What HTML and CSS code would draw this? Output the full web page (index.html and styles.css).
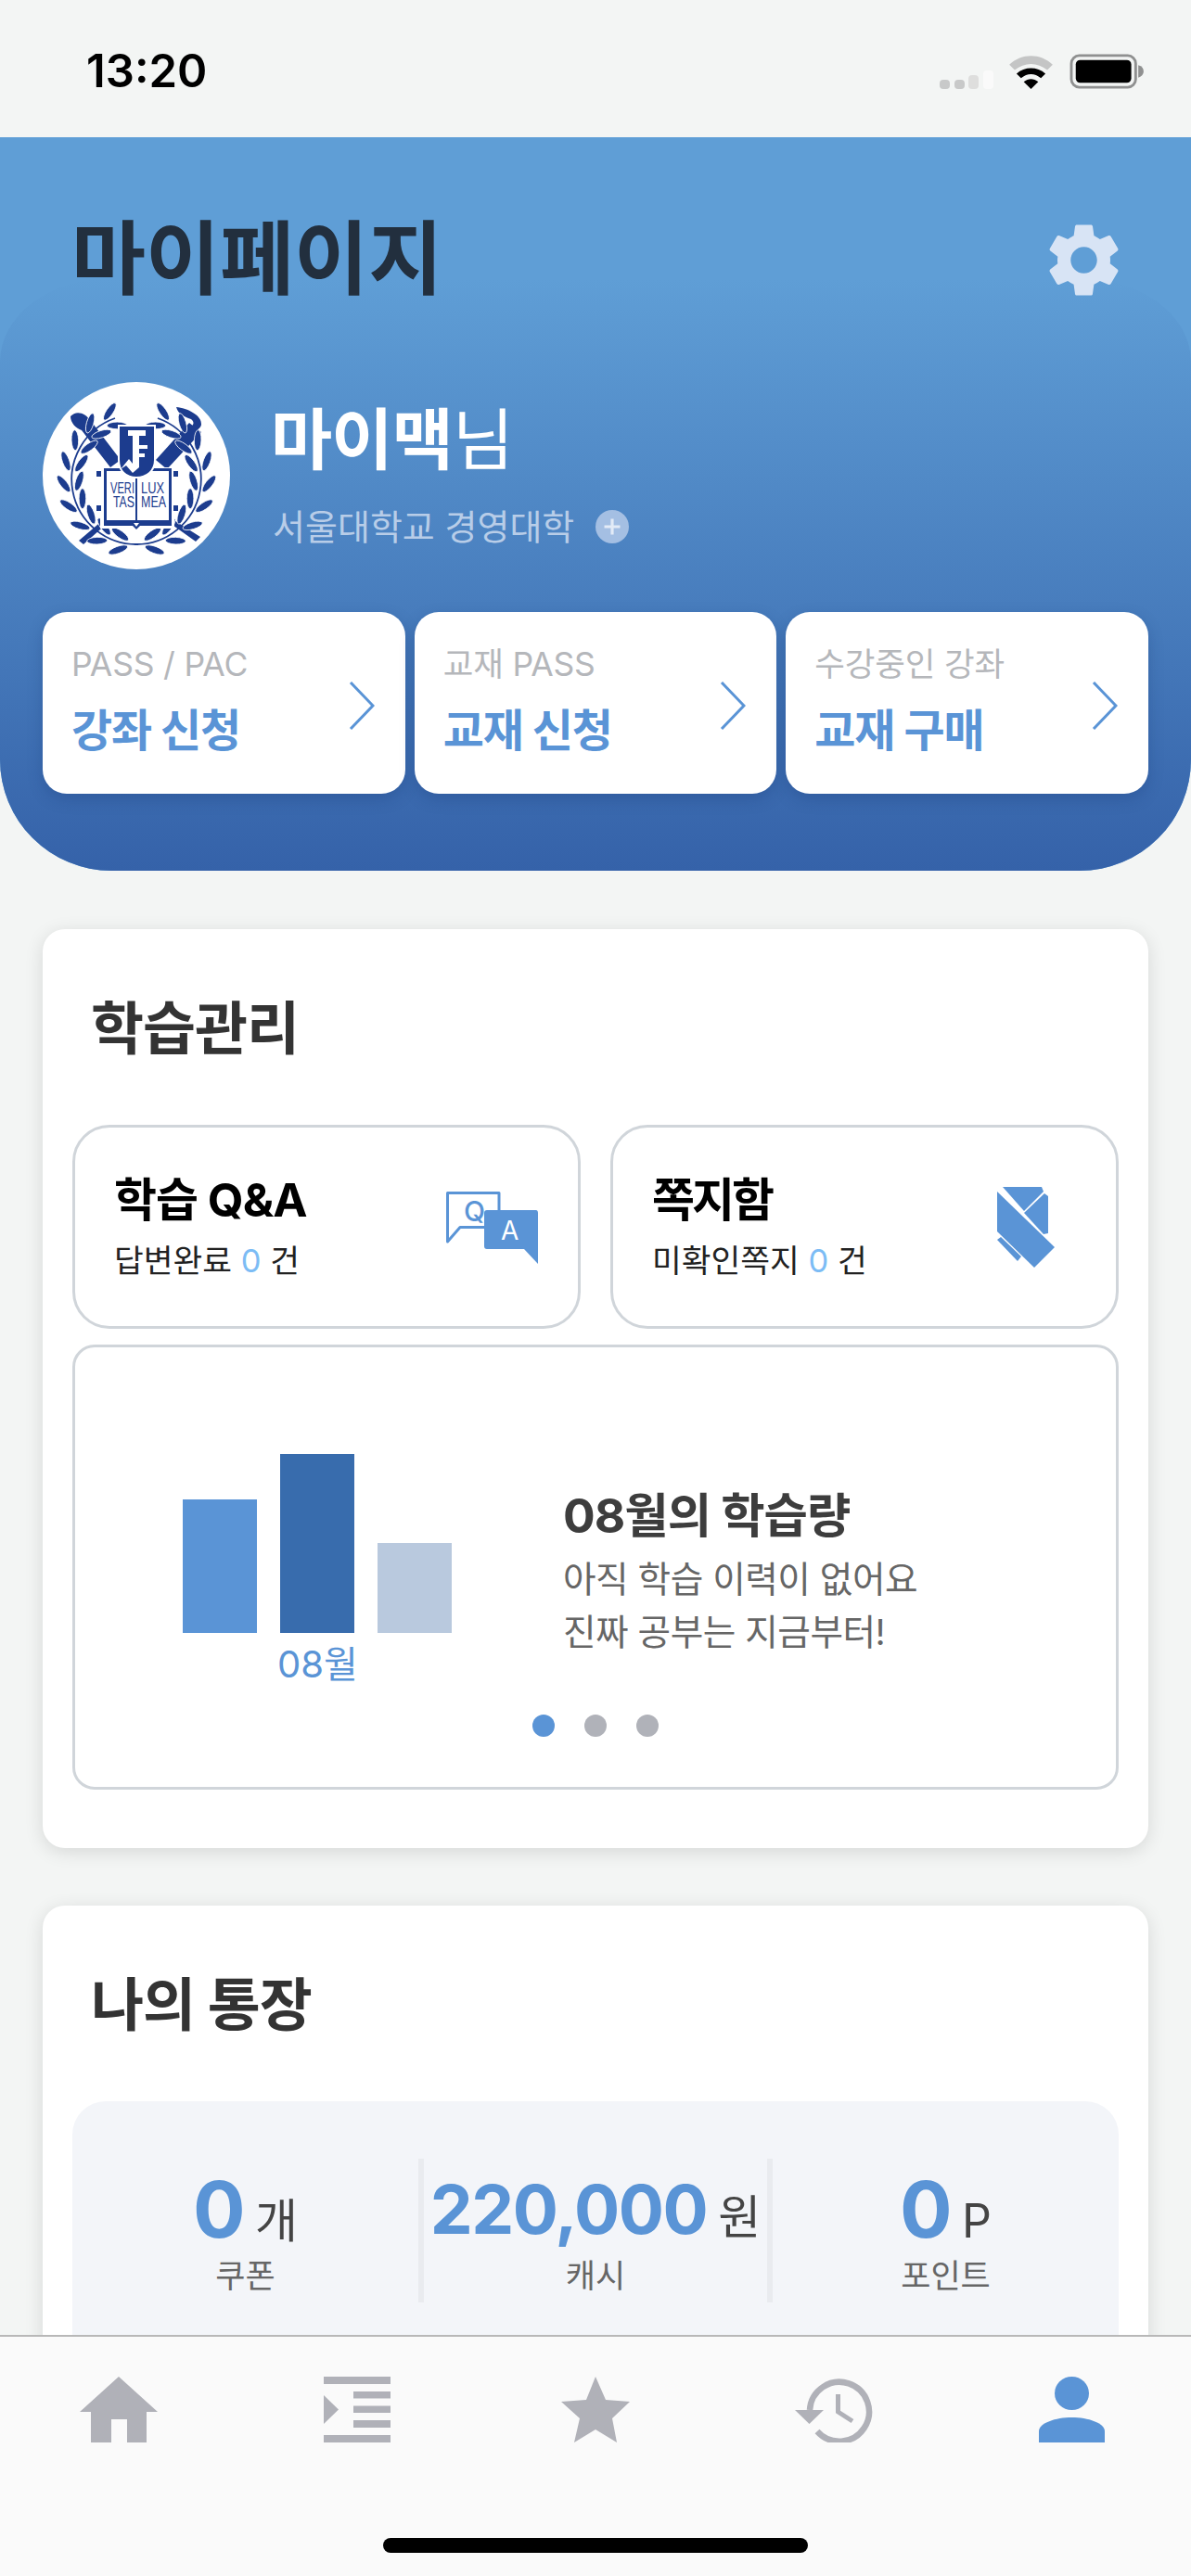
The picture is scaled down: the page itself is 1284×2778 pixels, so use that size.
FILE: index.html
```html
<!DOCTYPE html>
<html lang="ko">
<head>
<meta charset="utf-8">
<title>마이페이지</title>
<link rel="stylesheet" href="styles.css">
</head>
<body>
<div class="phone">
  <header class="status">
    <span class="time">13:20</span>
    <div class="status-icons">
      <svg class="signal" width="58" height="20" viewBox="0 0 58 20"><rect x="0" y="10" width="11" height="10" rx="4" fill="#c8c9c9"/><rect x="16" y="10" width="11" height="10" rx="4" fill="#c8c9c9"/><rect x="31" y="5" width="11" height="15" rx="4" fill="#dededd"/><rect x="47" y="0" width="11" height="20" rx="4" fill="#fafafa"/></svg>
      <svg class="wifi" width="49" height="37" viewBox="0 0 50 38"><path d="M1 11C15 -2 35 -2 49 11L43 17C32 8 18 8 7 17Z" fill="#c4c5c5"/><path d="M9 21C18 13 32 13 41 21L36 26C29 20 21 20 14 26Z" fill="#000"/><path d="M17 30C22 26 28 26 33 30L25 38Z" fill="#000"/></svg>
      <svg class="battery" width="82" height="38" viewBox="0 0 84 40"><rect x="2" y="2" width="73" height="36" rx="9" fill="none" stroke="#8f9090" stroke-width="3"/><rect x="7" y="7" width="63" height="26" rx="5" fill="#000"/><path d="M78 13C82 14 84 17 84 20C84 23 82 26 78 27Z" fill="#8f9090"/></svg>
    </div>
  </header>

  <section class="hero">
    <div class="hero-top">
      <h1 class="page-title">마이페이지</h1>
      <svg class="gear" width="95" height="95" viewBox="0 0 24 24"><path fill="#d8e4f5" d="M19.14 12.94c.04-.3.06-.61.06-.94 0-.32-.02-.64-.07-.94l2.03-1.58c.18-.14.23-.41.12-.61l-1.92-3.32c-.12-.22-.37-.29-.59-.22l-2.39.96c-.5-.38-1.03-.7-1.62-.94l-.36-2.54c-.04-.24-.24-.41-.48-.41h-3.84c-.24 0-.43.17-.47.41l-.36 2.54c-.59.24-1.13.57-1.62.94l-2.39-.96c-.22-.08-.47 0-.59.22L2.74 8.87c-.12.21-.08.47.12.61l2.03 1.58c-.05.3-.09.63-.09.94s.02.64.07.94l-2.03 1.58c-.18.14-.23.41-.12.61l1.92 3.32c.12.22.37.29.59.22l2.39-.96c.5.38 1.03.7 1.62.94l.36 2.54c.05.24.24.41.48.41h3.84c.24 0 .44-.17.47-.41l.36-2.54c.59-.24 1.13-.56 1.62-.94l2.39.96c.22.08.47 0 .59-.22l1.92-3.32c.12-.22.07-.47-.12-.61l-2.01-1.58zM12 15.6c-1.98 0-3.6-1.62-3.6-3.6s1.62-3.6 3.6-3.6 3.6 1.62 3.6 3.6-1.62 3.6-3.6 3.6z"/></svg>
    </div>

    <div class="profile">
      <svg class="avatar" width="202" height="202" viewBox="0 0 202 202">
        <defs>
          <g id="leaf-pair">
            <ellipse cx="92" cy="183" rx="11" ry="3.800" transform="rotate(-28 92 183)" stroke="#fff" stroke-width=".8"/>
            <ellipse cx="92" cy="166" rx="11" ry="3.800" transform="rotate(28 92 166)" stroke="#fff" stroke-width=".8"/>
          </g>
          <g id="wreath">
            <path d="M103 175A70 70 0 0 1 78 39" fill="none" stroke="#1c3c8e" stroke-width="1.800"/>
            <use href="#leaf-pair" transform="rotate(8 101 105)"/>
            <use href="#leaf-pair" transform="rotate(26 101 105)"/>
            <use href="#leaf-pair" transform="rotate(44 101 105)"/>
            <use href="#leaf-pair" transform="rotate(62 101 105)"/>
            <use href="#leaf-pair" transform="rotate(80 101 105)"/>
            <use href="#leaf-pair" transform="rotate(98 101 105)"/>
            <use href="#leaf-pair" transform="rotate(116 101 105)"/>
            <use href="#leaf-pair" transform="rotate(134 101 105)"/>
            <use href="#leaf-pair" transform="rotate(152 101 105)"/>
          </g>
        </defs>
        <circle cx="101" cy="101" r="101" fill="#fff"/>
        <g fill="#1c3c8e">
          <path d="M30 37C36 30 46 33 52 42L84 84L73 92L42 52C36 50 30 44 30 37Z"/>
          <path d="M158 44L171 54L134 94L122 84Z"/>
          <path d="M144 27C156 28 172 36 171 46C170 52 162 54 156 50C162 48 165 44 160 40C154 38 146 35 144 27Z"/>
          <path d="M39 171L66 148L70 152L44 175Z"/>
          <path d="M170 167L140 148L137 152L165 172Z"/>
          <use href="#wreath"/>
          <use href="#wreath" transform="translate(202 0) scale(-1 1)"/>
          <rect x="62" y="92" width="80" height="66" fill="#fff"/>
          <path fill-rule="evenodd" d="M66 93H100L101 95L102 93H139V152H66ZM69 96V149H100V98C100 97 99 96 98 96ZM136 96H105C103 96 102 97 102 98V149H136Z"/>
          <path d="M66 152H98L101 156L104 152H139V155H105L101 159L97 155H66Z"/>
          <rect x="58" y="96" width="5" height="6"/><rect x="58" y="133" width="5" height="6"/><rect x="141" y="96" width="5" height="6"/><rect x="141" y="133" width="5" height="6"/>
          <path d="M82 47H121V84C121 96 112 103 101 103C90 103 82 96 82 84Z" stroke="#fff" stroke-width="2"/>
          <text class="motto" x="73" y="120" textLength="26" lengthAdjust="spacingAndGlyphs">VERI</text>
          <text class="motto" x="106" y="120" textLength="25" lengthAdjust="spacingAndGlyphs">LUX</text>
          <text class="motto" x="76" y="135" textLength="23" lengthAdjust="spacingAndGlyphs">TAS</text>
          <text class="motto" x="106" y="135" textLength="27" lengthAdjust="spacingAndGlyphs">MEA</text>
        </g>
        <path fill="#fff" d="M92 52H111V58H104V68H113V72H104V77H110V81H104V92L97 98L90 90L84 94L93 83L97 88V58H92Z"/>
      </svg>
      <div class="profile-text">
        <p class="user-name"><strong>마이맥</strong>님</p>
        <p class="school"><span>서울대학교 경영대학</span>
          <svg class="plus" width="36" height="36" viewBox="0 0 34 34"><circle cx="17" cy="17" r="17" fill="#a4bfe3"/><path d="M17 9V25M9 17H25" stroke="#e3ebf7" stroke-width="3"/></svg>
        </p>
      </div>
    </div>

    <div class="quick-row">
      <a class="quick">
        <div><p class="quick-label">PASS / PAC</p><p class="quick-main">강좌 신청</p></div>
        <svg class="chev" width="28" height="52" viewBox="0 0 28 52"><path d="M2 1L26 26L2 51" fill="none" stroke="#5a94d6" stroke-width="3"/></svg>
      </a>
      <a class="quick">
        <div><p class="quick-label">교재 PASS</p><p class="quick-main">교재 신청</p></div>
        <svg class="chev" width="28" height="52" viewBox="0 0 28 52"><path d="M2 1L26 26L2 51" fill="none" stroke="#5a94d6" stroke-width="3"/></svg>
      </a>
      <a class="quick">
        <div><p class="quick-label">수강중인 강좌</p><p class="quick-main">교재 구매</p></div>
        <svg class="chev" width="28" height="52" viewBox="0 0 28 52"><path d="M2 1L26 26L2 51" fill="none" stroke="#5a94d6" stroke-width="3"/></svg>
      </a>
    </div>
  </section>

  <main class="content">
    <section class="card study">
      <h2 class="card-title">학습관리</h2>
      <div class="mini-row">
        <div class="mini">
          <div><p class="mini-title">학습 Q&amp;A</p><p class="mini-sub">답변완료 <em>0</em> 건</p></div>
          <svg class="mini-icon qa" width="100" height="78" viewBox="0 0 100 78">
            <path d="M1.500 1.500H57V38.500H15L1.500 54Z" fill="#fff" stroke="#5a94d6" stroke-width="3" stroke-linejoin="round"/>
            <text class="qa-q" x="19" y="32">Q</text>
            <path d="M41 23C41 21 42 20 44 20H97C98 20 99 21 99 23V78L84 62H44C42 62 41 61 41 59Z" fill="#5a94d6"/>
            <text class="qa-a" x="59" y="52">A</text>
          </svg>
        </div>
        <div class="mini">
          <div><p class="mini-title tight">쪽지함</p><p class="mini-sub">미확인쪽지 <em>0</em> 건</p></div>
          <svg class="mini-icon note" width="62" height="87" viewBox="0 0 62 87" fill="#5a94d6">
            <path d="M6 0H48L50 5L29 26Z"/>
            <path d="M0 5L62 65L40 87L0 48Z"/>
            <path d="M51 7L55 10V50L50 51L29 28Z"/>
            <path d="M0 57L4 54L26 75L22 80Z"/>
          </svg>
        </div>
      </div>
      <div class="chart-box">
        <div class="chart-body">
          <div class="chart">
            <div class="bars">
              <span class="bar bar-a"></span>
              <span class="bar bar-b"></span>
              <span class="bar bar-c"></span>
            </div>
            <p class="chart-month">08월</p>
          </div>
          <div class="chart-text">
            <h3>08월의 학습량</h3>
            <p>아직 학습 이력이 없어요<br>진짜 공부는 지금부터!</p>
          </div>
        </div>
        <div class="dots"><span class="dot on"></span><span class="dot"></span><span class="dot"></span></div>
      </div>
    </section>

    <section class="card bank">
      <h2 class="card-title">나의 통장</h2>
      <div class="bank-panel">
        <div class="stat">
          <p class="stat-value"><b class="big">0</b><i>개</i></p>
          <p class="stat-label">쿠폰</p>
        </div>
        <div class="stat">
          <p class="stat-value"><b>220,000</b><i>원</i></p>
          <p class="stat-label">캐시</p>
        </div>
        <div class="stat">
          <p class="stat-value"><b class="big">0</b><i>P</i></p>
          <p class="stat-label">포인트</p>
        </div>
      </div>
    </section>
  </main>

  <nav class="tabbar">
    <svg width="84" height="71" viewBox="0 0 84 71" fill="#b0b1b8"><path d="M42 0L84 38H72V71H51V46H34V71H12V38H0Z"/></svg>
    <svg width="72" height="71" viewBox="0 0 72 71" fill="#b0b1b8"><rect width="72" height="8"/><rect x="32" y="16" width="40" height="7.500"/><rect x="32" y="31.500" width="40" height="7.500"/><rect x="32" y="47" width="40" height="8"/><rect y="63" width="72" height="8"/><path d="M0 20L16 35.500L0 51Z"/></svg>
    <svg width="74" height="71" viewBox="0 0 74 71" fill="#b0b1b8"><path d="M37 0L48 25L74 27L55 45L60 71L37 57L14 71L20 45L0 27L27 25Z"/></svg>
    <svg width="84" height="71" viewBox="0 0 84 71"><path d="M16 36A32 32 0 1 1 24 59" fill="none" stroke="#b0b1b8" stroke-width="6.500"/><path d="M0 36H31L15.500 51Z" fill="#b0b1b8"/><path d="M46.500 19V38L62 48" fill="none" stroke="#b0b1b8" stroke-width="5"/></svg>
    <svg width="71" height="71" viewBox="0 0 71 71" fill="#5a94d6"><ellipse cx="35.500" cy="18" rx="18.500" ry="18"/><path d="M0 71V59C0 50 18 44 35.500 44C53 44 71 50 71 59V71Z"/></svg>
    <span class="home-bar"></span>
  </nav>
</div>
</body>
</html>
```
FILE: styles.css
```css
* { box-sizing: border-box; margin: 0; padding: 0; }
html, body { width: 1284px; height: 2778px; overflow: hidden; }
body { font-family: "Inter", "Noto Sans CJK KR", sans-serif; background: #f3f5f4; color: #333; }
svg { display: block; flex: none; }
.phone { position: relative; width: 1284px; height: 2778px; overflow: hidden; }

.status { height: 148px; display: flex; justify-content: space-between; align-items: flex-start; padding: 52px 50px 0 93px; }
.time { font-size: 49px; line-height: 50px; font-weight: 600; color: #000; }
.status-icons { display: flex; align-items: flex-end; gap: 16px; margin-top: 6px; }

.hero { position: relative; height: 791px; background: #5f9ed6; border-radius: 0 0 120px 120px; padding: 0 46px; }
.hero::before { content: ""; position: absolute; left: 0; right: 0; top: 152px; bottom: 0; border-radius: 120px 120px 120px 120px / 90px 90px 120px 120px; background: linear-gradient(#5f9ed6, #3562a9); }
.hero > * { position: relative; }
.hero-top { height: 172px; padding: 92px 22px 0 31px; display: flex; justify-content: space-between; align-items: center; }
.page-title { font-size: 87px; line-height: 100px; font-weight: 700; color: #222f3e; }
.profile { display: flex; align-items: flex-start; gap: 44px; margin-top: 92px; }
.profile-text { padding-top: 22px; }
.user-name { font-size: 72px; line-height: 80px; color: #fff; letter-spacing: -1px; font-weight: 400; }
.user-name strong { font-weight: 700; }
.school { display: flex; align-items: center; gap: 23px; margin: 32px 0 0 2px; font-size: 38px; line-height: 44px; color: #b8cde8; }
.quick-row { display: flex; gap: 10px; margin-top: 46px; }
.quick { flex: 1; height: 196px; background: #fff; border-radius: 26px; padding: 34px 33px 0 31px; display: flex; justify-content: space-between; box-shadow: 0 6px 16px rgba(20, 50, 110, .25); }
.quick-label { font-size: 35.500px; line-height: 46px; color: #b5b7bb; letter-spacing: -.2px; }
.quick-main { font-size: 48px; line-height: 62px; font-weight: 700; color: #5a94d6; margin-top: 17px; letter-spacing: -1.200px; }
.chev { margin-top: 41px; }

.content { padding: 63px 46px 0; display: flex; flex-direction: column; gap: 62px; }
.card { background: #fff; border-radius: 24px; padding: 0 32px; box-shadow: 0 4px 20px rgba(0, 0, 0, .12); }
.study { height: 991px; }
.bank { height: 700px; }
.card-title { font-size: 62px; line-height: 76px; font-weight: 700; color: #333; padding: 70px 0 0 20px; height: 211px; letter-spacing: -1px; }
.mini-row { display: flex; gap: 32px; }
.mini { flex: 1; height: 220px; border: 3px solid #d0d5da; border-radius: 40px; padding: 47px 42px 0 42px; display: flex; justify-content: space-between; }
.mini-title { font-size: 50px; line-height: 62px; font-weight: 700; color: #000; letter-spacing: -1px; }
.mini-title.tight { letter-spacing: -3px; }
.mini-sub { font-size: 34.500px; line-height: 50px; color: #222; margin-top: 10px; }
.mini-sub em { font-style: normal; color: #7cbcf5; }
.mini-icon.qa { margin-top: 22px; }
.mini-icon.note { margin: 17px 24px 0 0; }
.qa-q { font: 500 30px "Inter", sans-serif; fill: #5a94d6; }
.qa-a { font: 400 28px "Inter", sans-serif; fill: #fff; }
.motto { font: 400 16.500px "Liberation Sans", sans-serif; fill: #1c3c8e; }

.chart-box { margin-top: 17px; height: 480px; border: 3px solid #d0d5da; border-radius: 24px; padding-top: 115px; }
.chart-body { display: flex; gap: 120px; padding-left: 116px; }
.chart { width: 291px; }
.bars { display: flex; align-items: flex-end; height: 193px; gap: 25px; }
.bar { display: block; width: 80px; }
.bar-a { height: 144px; background: #5a94d6; }
.bar-b { height: 193px; background: #386cad; }
.bar-c { height: 97px; background: #b9c9de; }
.chart-month { width: 291px; text-align: center; font-size: 40px; line-height: 48px; color: #5a94d6; margin-top: 10px; }
.chart-text { padding-top: 35px; margin-left: -1px; }
.chart-text h3 { font-size: 51.500px; line-height: 62px; font-weight: 700; color: #3d3d3d; letter-spacing: -1px; }
.chart-text p { font-size: 38.700px; line-height: 57px; color: #666; margin-top: 10px; letter-spacing: -.5px; }
.dots { display: flex; gap: 32px; justify-content: center; margin-top: 30px; }
.dot { width: 24px; height: 24px; border-radius: 50%; background: #b0b2b9; }
.dot.on { background: #5a94d6; }

.bank-panel { background: #f3f5f9; border-radius: 36px; height: 300px; padding-top: 62px; display: grid; grid-template-columns: 379px 376px 1fr; }
.stat { height: 155px; text-align: center; border-right: 6px solid #e9ebef; }
.stat:last-child { border-right: 0; }
.stat-value { display: flex; align-items: baseline; justify-content: center; gap: 12px; height: 104px; padding-top: 6px; line-height: 98px; color: #444; }
.stat-value b { font-size: 73px; font-weight: 700; color: #5a94d6; letter-spacing: -1.500px; }
.stat-value b.big { font-size: 84px; }
.stat-value i { font-style: normal; font-size: 50px; }
.stat-label { font-size: 35px; line-height: 44px; color: #666; }

.tabbar { position: absolute; left: 0; right: 0; top: 2518px; bottom: 0; background: #fafafa; border-top: 2px solid #b8b8b8; display: grid; grid-template-columns: repeat(5, 1fr); justify-items: center; align-items: start; padding-top: 43px; }
.home-bar { position: absolute; left: 413px; bottom: 25px; width: 458px; height: 16px; border-radius: 8px; background: #000; }
```
